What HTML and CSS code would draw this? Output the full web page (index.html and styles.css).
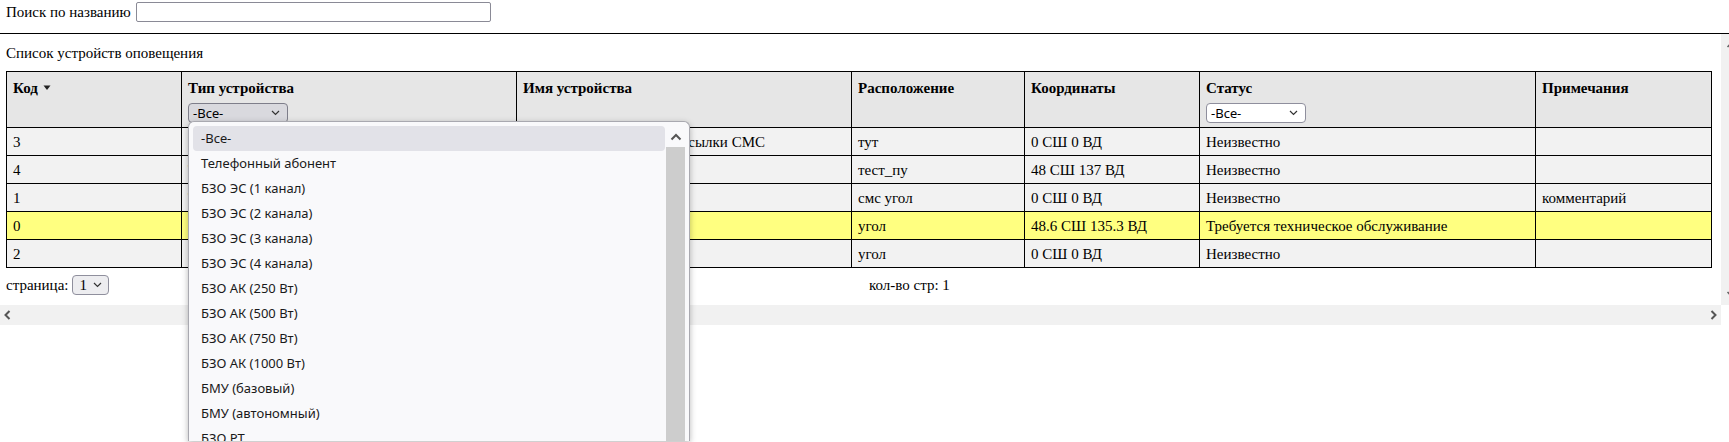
FILE: index.html
```html
<!DOCTYPE html>
<html lang="ru">
<head>
<meta charset="utf-8">
<title>Список устройств оповещения</title>
<link rel="stylesheet" href="styles.css">
</head>
<body>
<div class="page">
<div class="search">
  <label class="search-label" for="q">Поиск по названию</label>
  <input class="search-input" id="q" type="text">
</div>
<div class="frame">
  <div class="frame-body">
    <div class="content">
      <div class="caption">Список устройств оповещения</div>
      <table class="grid">
        <colgroup>
          <col class="c-code"><col class="c-type"><col class="c-name"><col class="c-loc"><col class="c-coord"><col class="c-status"><col class="c-note">
        </colgroup>
        <thead>
          <tr>
            <th>Код <svg class="sort" width="8" height="6" viewBox="0 0 8 6"><path d="M0.5 0.5H7.5L4 5Z" fill="#222"/></svg></th>
            <th>Тип устройства<br>
              <span class="select-wrap">
                <span class="select select-open">-Все-<svg class="chev" width="9" height="6" viewBox="0 0 9 6"><path d="M1 1L4.5 4.5L8 1" fill="none" stroke="#333" stroke-width="1.2"/></svg></span>
                <span class="popup">
                  <span class="popup-list">
                    <span class="opt opt-active">-Все-</span>
                    <span class="opt">Телефонный абонент</span>
                    <span class="opt">БЗО ЭС (1 канал)</span>
                    <span class="opt">БЗО ЭС (2 канала)</span>
                    <span class="opt">БЗО ЭС (3 канала)</span>
                    <span class="opt">БЗО ЭС (4 канала)</span>
                    <span class="opt">БЗО АК (250 Вт)</span>
                    <span class="opt">БЗО АК (500 Вт)</span>
                    <span class="opt">БЗО АК (750 Вт)</span>
                    <span class="opt">БЗО АК (1000 Вт)</span>
                    <span class="opt">БМУ (базовый)</span>
                    <span class="opt">БМУ (автономный)</span>
                    <span class="opt">БЗО РТ</span>
                  </span>
                  <span class="popup-scroll">
                    <span class="popup-up"><svg width="12" height="8" viewBox="0 0 12 8"><path d="M1.5 6.5L6 2L10.5 6.5" fill="none" stroke="#555" stroke-width="2"/></svg></span>
                    <span class="popup-thumb"></span>
                  </span>
                </span>
              </span>
            </th>
            <th>Имя устройства</th>
            <th>Расположение</th>
            <th>Координаты</th>
            <th>Статус<br>
              <span class="select">-Все-<svg class="chev" width="9" height="6" viewBox="0 0 9 6"><path d="M1 1L4.5 4.5L8 1" fill="none" stroke="#333" stroke-width="1.2"/></svg></span>
            </th>
            <th>Примечания</th>
          </tr>
        </thead>
        <tbody>
          <tr><td>3</td><td>Модуль рассылки СМС</td><td>Новое устройство для рассылки СМС</td><td>тут</td><td>0 СШ 0 ВД</td><td>Неизвестно</td><td></td></tr>
          <tr><td>4</td><td>Телефонный абонент</td><td>тест</td><td>тест_пу</td><td>48 СШ 137 ВД</td><td>Неизвестно</td><td></td></tr>
          <tr><td>1</td><td>Телефонный абонент</td><td>смс</td><td>смс угол</td><td>0 СШ 0 ВД</td><td>Неизвестно</td><td>комментарий</td></tr>
          <tr class="warn"><td>0</td><td>БЗО ЭС (1 канал)</td><td>угол</td><td>угол</td><td>48.6 СШ 135.3 ВД</td><td>Требуется техническое обслуживание</td><td></td></tr>
          <tr><td>2</td><td>БЗО АК (250 Вт)</td><td>угол 2</td><td>угол</td><td>0 СШ 0 ВД</td><td>Неизвестно</td><td></td></tr>
        </tbody>
      </table>
      <div class="pager">
        <div class="pager-left">страница: <span class="select select-page">1<svg class="chev" width="9" height="6" viewBox="0 0 9 6"><path d="M1 1L4.5 4.5L8 1" fill="none" stroke="#333" stroke-width="1.2"/></svg></span></div>
        <div class="pager-right">кол-во стр: 1</div>
      </div>
    </div>
    <div class="vscroll">
      <svg class="v-up" width="20" height="10" viewBox="0 0 20 10"><path d="M6.5 7L10 3.5L13.5 7" fill="none" stroke="#666" stroke-width="1.6"/></svg>
      <svg class="v-down" width="20" height="10" viewBox="0 0 20 10"><path d="M6.5 3L10 6.5L13.5 3" fill="none" stroke="#666" stroke-width="1.6"/></svg>
    </div>
  </div>
  <div class="hscroll-row">
    <div class="hscroll">
      <svg width="10" height="20" viewBox="0 0 10 20"><path d="M7.5 6L3.5 10L7.5 14" fill="none" stroke="#555" stroke-width="2"/></svg>
      <svg width="10" height="20" viewBox="0 0 10 20"><path d="M2.5 6L6.5 10L2.5 14" fill="none" stroke="#555" stroke-width="2"/></svg>
    </div>
  </div>
</div>
</div>
</body>
</html>
```
FILE: styles.css
```css
html {
  margin: 0;
  padding: 0;
  background: #fff;
  overflow: hidden;
}
body {
  margin: 0;
  padding: 0;
  font-family: "Liberation Serif", "Times New Roman", serif;
  font-size: 15px;
  color: #000;
}
.page {
  height: 442px;
  overflow: hidden;
}
.search {
  display: flex;
  align-items: center;
  height: 24px;
  padding: 0 6px;
  gap: 5px;
  margin-bottom: 9px;
}
.search-label {
  font-size: 15px;
}
.search-input {
  width: 355px;
  height: 20px;
  box-sizing: border-box;
  border: 1px solid #8a8a96;
  border-radius: 2px;
  padding: 0 2px;
  margin: 0;
  font-size: 13px;
}
.frame {
  border-top: 1px solid #000;
}
.frame-body {
  display: flex;
  height: 271px;
}
.content {
  width: 1721px;
  flex-shrink: 0;
  padding: 0 6px;
  box-sizing: border-box;
}
.caption {
  padding-top: 10px;
  height: 27px;
  font-size: 15px;
  line-height: 18px;
}
.grid {
  border-collapse: collapse;
  table-layout: fixed;
  width: 1705px;
}
.c-code { width: 175px; }
.c-type { width: 335px; }
.c-name { width: 335px; }
.c-loc { width: 173px; }
.c-coord { width: 175px; }
.c-status { width: 336px; }
.c-note { width: 176px; }
.grid th, .grid td {
  border: 1px solid #000;
  padding: 0 6px;
  text-align: left;
  white-space: nowrap;
  overflow: visible;
}
.grid th {
  background: #e6e6e6;
  vertical-align: top;
  height: 56px;
  padding-top: 7px;
  padding-bottom: 0;
  box-sizing: border-box;
  font-weight: bold;
  line-height: 18px;
}
.grid td {
  background: #f2f2f2;
  height: 28px;
  box-sizing: border-box;
  line-height: 18px;
  overflow: hidden;
}
.grid tr.warn td {
  background: #ffff80;
}
.sort {
  margin-left: 1px;
  vertical-align: 2px;
}
.select-wrap {
  position: relative;
  display: inline-block;
}
.select {
  display: inline-flex;
  align-items: center;
  justify-content: space-between;
  box-sizing: border-box;
  width: 100px;
  height: 20px;
  margin-top: 6px;
  padding: 0 7px 0 4px;
  border: 1px solid #8f8f9d;
  border-radius: 4px;
  background: #fff;
  font-family: "Noto Sans", "Open Sans", sans-serif;
  font-size: 13px;
  font-weight: normal;
  line-height: 18px;
  vertical-align: top;
}
.select-open {
  background: #d9d9de;
  border-color: #7e7e8a;
}
.chev {
  flex-shrink: 0;
}
.popup {
  position: absolute;
  top: 24px;
  left: 0;
  width: 502px;
  height: 320px;
  box-sizing: border-box;
  display: flex;
  padding: 4px 3px 0 4px;
  background: #f9f9fb;
  border: 1px solid #a9a9b0;
  border-bottom: 0;
  border-radius: 6px 6px 0 0;
  box-shadow: 0 2px 6px rgba(0, 0, 0, 0.28);
  z-index: 5;
  overflow: hidden;
}
.popup-list {
  flex: 1;
  display: flex;
  flex-direction: column;
}
.opt {
  display: block;
  flex-shrink: 0;
  height: 25px;
  line-height: 25px;
  padding-left: 8px;
  font-family: "Noto Sans", "Open Sans", sans-serif;
  font-size: 13px;
  font-weight: normal;
  color: #1a1a1a;
  border-radius: 4px;
}
.opt-active {
  background: #e2e2e8;
}
.popup-scroll {
  width: 21px;
  display: flex;
  flex-direction: column;
  align-items: center;
}
.popup-up {
  height: 21px;
  display: flex;
  align-items: center;
  justify-content: center;
}
.popup-thumb {
  width: 19px;
  flex: 1;
  background: #cdcdcd;
}
.pager {
  display: grid;
  grid-template-columns: 863px 1fr;
  align-items: center;
  height: 34px;
}
.pager-left {
  display: flex;
  align-items: center;
  gap: 4px;
}
.select-page {
  width: 37px;
  margin-top: 0;
  padding: 0 6px 0 6px;
  background: #ededf0;
  font-family: "Liberation Serif", "Times New Roman", serif;
  font-size: 15px;
}
.vscroll {
  width: 8px;
  flex-shrink: 0;
  background: #f1f1f1;
  overflow: hidden;
  display: flex;
  flex-direction: column;
  justify-content: space-between;
  padding: 6px 0 6px 0;
  box-sizing: border-box;
}
.vscroll svg {
  display: block;
  flex-shrink: 0;
}
.hscroll-row {
  display: flex;
}
.hscroll {
  width: 1721px;
  height: 20px;
  background: #f1f1f1;
  display: flex;
  justify-content: space-between;
  align-items: center;
  padding: 0 2px;
  box-sizing: border-box;
}
.hscroll svg {
  display: block;
}
```
